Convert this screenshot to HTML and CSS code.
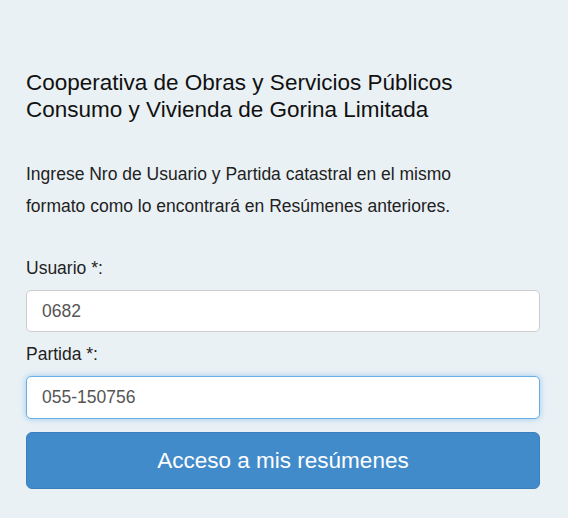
FILE: index.html
```html
<!DOCTYPE html>
<html lang="es">
<head>
    <meta charset="UTF-8">
    <meta name="viewport" content="width=device-width, initial-scale=1.0">
    <title>Acceso a mis resúmenes</title>
    <link rel="stylesheet" href="styles.css">
</head>
<body>
    <div class="login">
        <h1>Cooperativa de Obras y Servicios Públicos<br>Consumo y Vivienda de Gorina Limitada</h1>

        <p class="intro">Ingrese Nro de Usuario y Partida catastral en el mismo<br>formato como lo encontrará en Resúmenes anteriores.</p>

        <form class="login-form">
            <label for="usuario">Usuario *:</label>
            <input type="text" id="usuario" value="0682">

            <label for="partida">Partida *:</label>
            <input type="text" id="partida" class="focused" value="055-150756">

            <button type="button">Acceso a mis resúmenes</button>
        </form>
    </div>
</body>
</html>
```

FILE: styles.css
```css
body {
    font-family: 'Liberation Sans', Arial, sans-serif;
    color: #222;
    margin: 0;
    background-color: #eaf1f5;
}
.login {
    width: 514px;
    padding: 69px 26px 20px;
}
h1 {
    font-size: 22.5px;
    font-weight: normal;
    line-height: 27px;
    margin: 0 0 35px;
    color: #111;
}
.intro {
    font-size: 17.5px;
    line-height: 32px;
    margin: 0 0 36px;
}
.login-form {
    display: flex;
    flex-direction: column;
}
label {
    font-size: 17.5px;
    line-height: 20px;
    margin-bottom: 12px;
}
input {
    font-family: 'Liberation Sans', Arial, sans-serif;
    font-size: 17.5px;
    color: #555;
    height: 42px;
    padding: 0 15px;
    border: 1px solid #ccc;
    border-radius: 5px;
    background: #fff;
    box-sizing: border-box;
    margin-bottom: 12px;
    outline: none;
}
input.focused {
    height: 43px;
    margin-bottom: 13px;
    border-color: #66afe9;
    box-shadow: 0 0 6px rgba(102, 175, 233, 0.6);
}
button {
    font-family: 'Liberation Sans', Arial, sans-serif;
    font-size: 22.5px;
    color: #fff;
    background-color: #428bca;
    border: 1px solid #3b80bc;
    border-radius: 6px;
    height: 57px;
    padding-top: 2px;
    cursor: pointer;
}
```
